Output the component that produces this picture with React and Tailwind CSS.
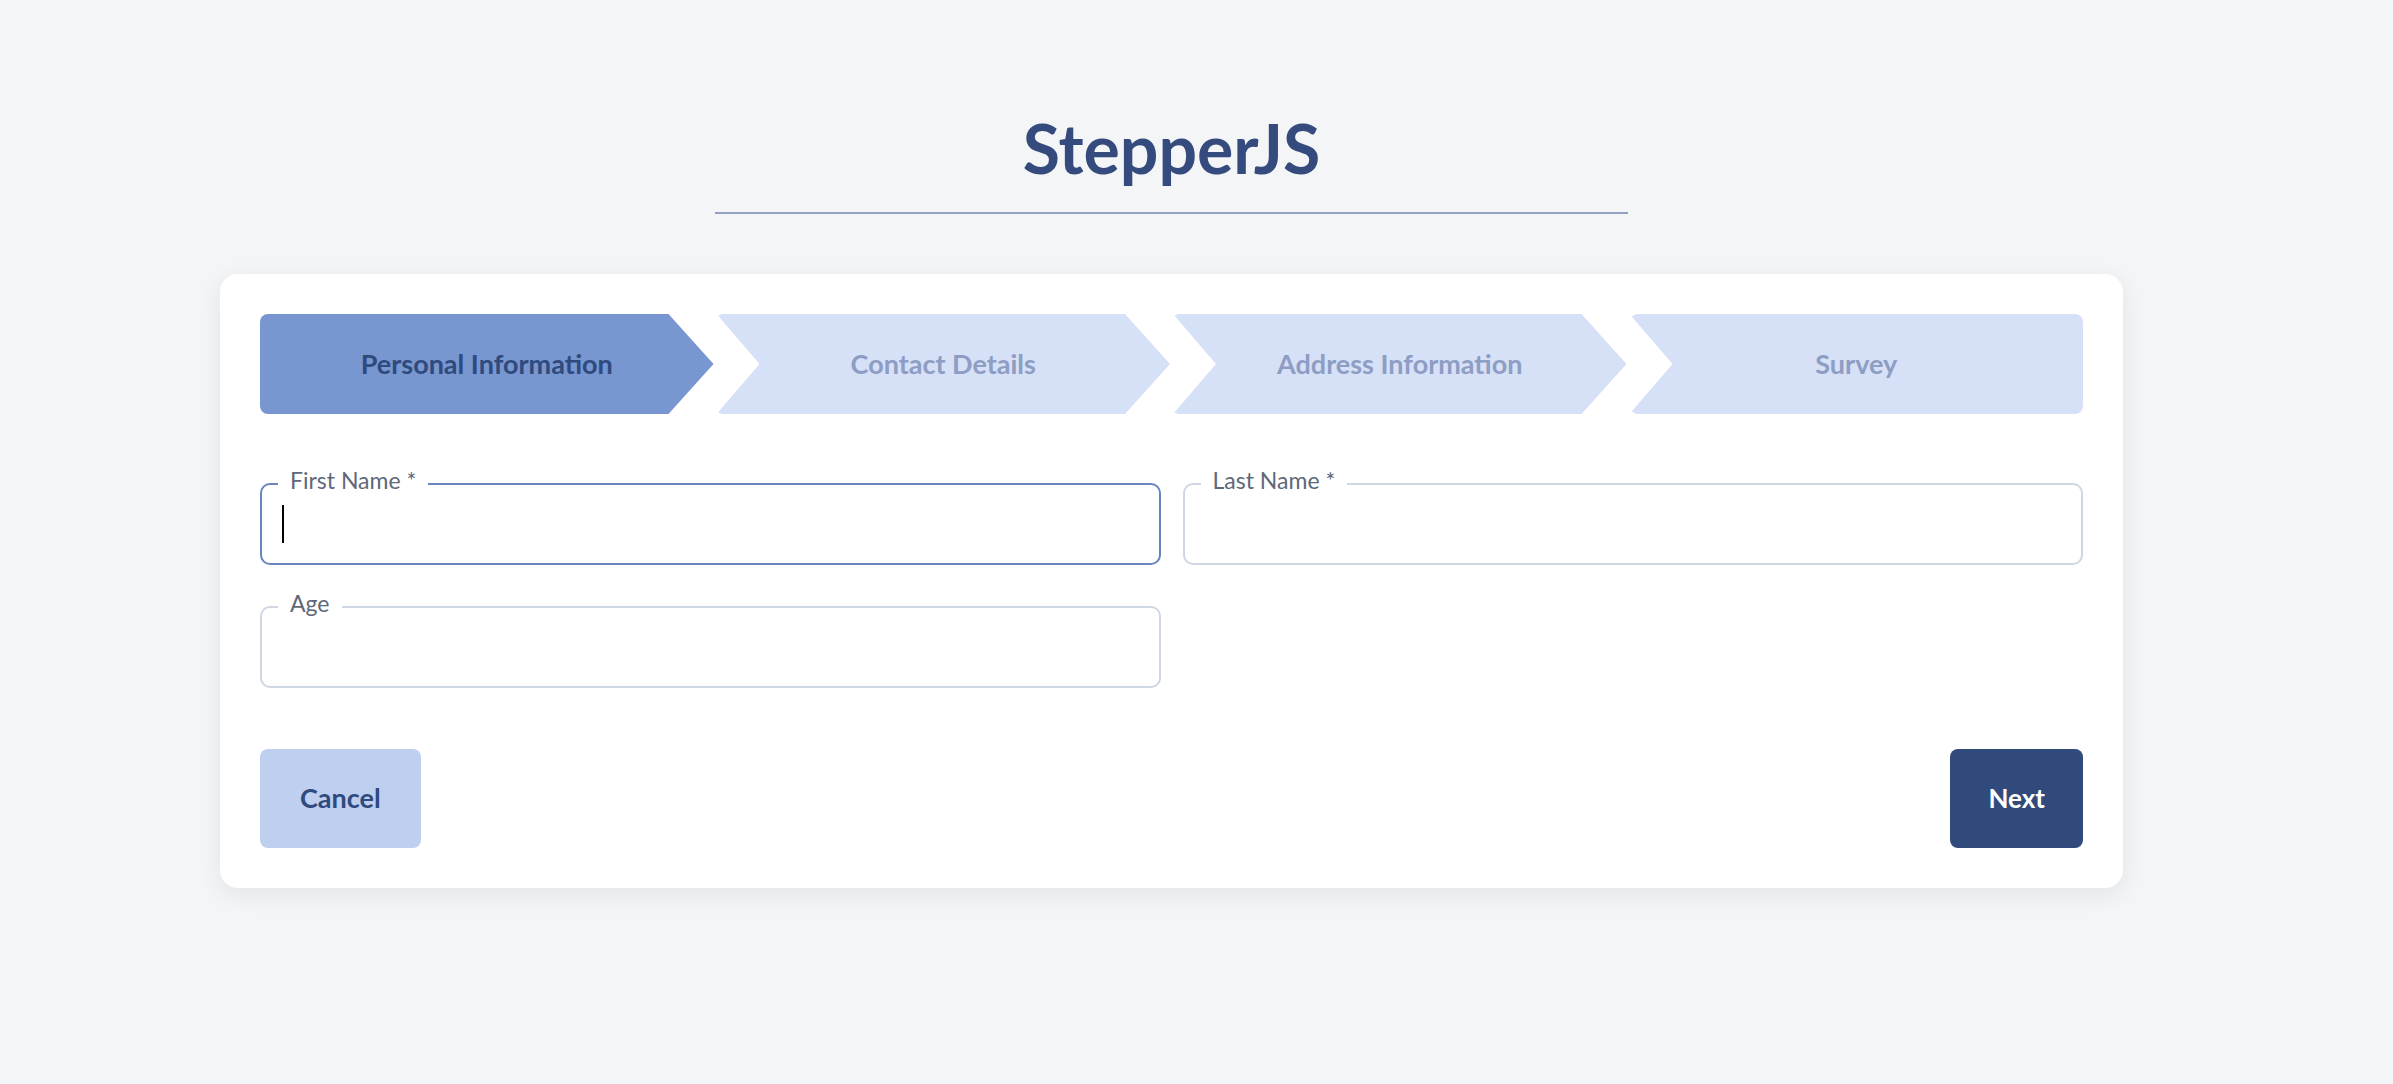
export default function App() {
  const steps = [
    { label: "Personal Information", kind: "first", active: true },
    { label: "Contact Details", kind: "mid" },
    { label: "Address Information", kind: "mid" },
    { label: "Survey", kind: "last" },
  ];
  const clip = {
    first:
      "rounded-l-lg [clip-path:polygon(0_0,calc(100%_-_45px)_0,100%_50%,calc(100%_-_45px)_100%,0_100%)]",
    mid: "rounded-md [clip-path:polygon(0_0,calc(100%_-_45px)_0,100%_50%,calc(100%_-_45px)_100%,0_100%,43px_50%)]",
    last: "rounded-lg [clip-path:polygon(0_0,100%_0,100%_100%,0_100%,43px_50%)]",
  };
  return (
    <div className="min-h-screen bg-[#f4f5f7] [font-family:Lato,'Open_Sans',sans-serif]">
      <div className="ml-[220px] w-[1903px] pt-[114px]">
        <div className="flex flex-col items-center">
          <h1 className="text-[68px] font-bold leading-none text-[#354a7d]">StepperJS</h1>
          <div className="mt-[30px] h-[2px] w-[913px] bg-[#94a1c4]"></div>
        </div>
        <div className="mt-[60px] rounded-[18px] bg-white p-10 shadow-[0_6px_24px_rgba(15,23,42,0.08)]">
          <div className="flex h-[100px] gap-[3px]">
            {steps.map((s) =>
              s.active ? (
                <div
                  key={s.label}
                  className={`flex flex-1 items-center justify-center bg-[#7896d0] text-[27px] font-bold text-[#2f4a7d] ${clip[s.kind]}`}
                >
                  {s.label}
                </div>
              ) : (
                <div
                  key={s.label}
                  className={`flex flex-1 items-center justify-center bg-[#d6e0f6] text-[27px] font-bold text-[#8d9dc3] ${clip[s.kind]}`}
                >
                  {s.label}
                </div>
              )
            )}
          </div>

          <div className="mt-[69px] grid grid-cols-2 gap-x-[22px] gap-y-[41px]">
            <div className="relative flex h-[82px] items-center rounded-[10px] border-2 border-[#6a84bf] pl-5">
              <span className="absolute left-4 top-0 -translate-y-[68%] bg-white px-3 text-[23px] leading-none text-[#5e6878]">
                First Name *
              </span>
              <span className="h-[38px] w-[2px] bg-black"></span>
            </div>
            <div className="relative h-[82px] rounded-[10px] border-2 border-[#cfd7e3]">
              <span className="absolute left-4 top-0 -translate-y-[68%] bg-white px-3 text-[23px] leading-none text-[#5e6878]">
                Last Name *
              </span>
            </div>
            <div className="relative h-[82px] rounded-[10px] border-2 border-[#cfd7e3]">
              <span className="absolute left-4 top-0 -translate-y-[68%] bg-white px-3 text-[23px] leading-none text-[#5e6878]">
                Age
              </span>
            </div>
          </div>

          <div className="mt-[61px] flex justify-between">
            <button className="flex h-[99px] items-center rounded-lg bg-[#bfcff0] px-10 text-[27px] font-bold text-[#2f4a7d]">
              Cancel
            </button>
            <button className="flex h-[99px] items-center rounded-lg bg-[#314a7c] px-[38px] text-[26px] font-bold text-white">
              Next
            </button>
          </div>
        </div>
      </div>
    </div>
  );
}
